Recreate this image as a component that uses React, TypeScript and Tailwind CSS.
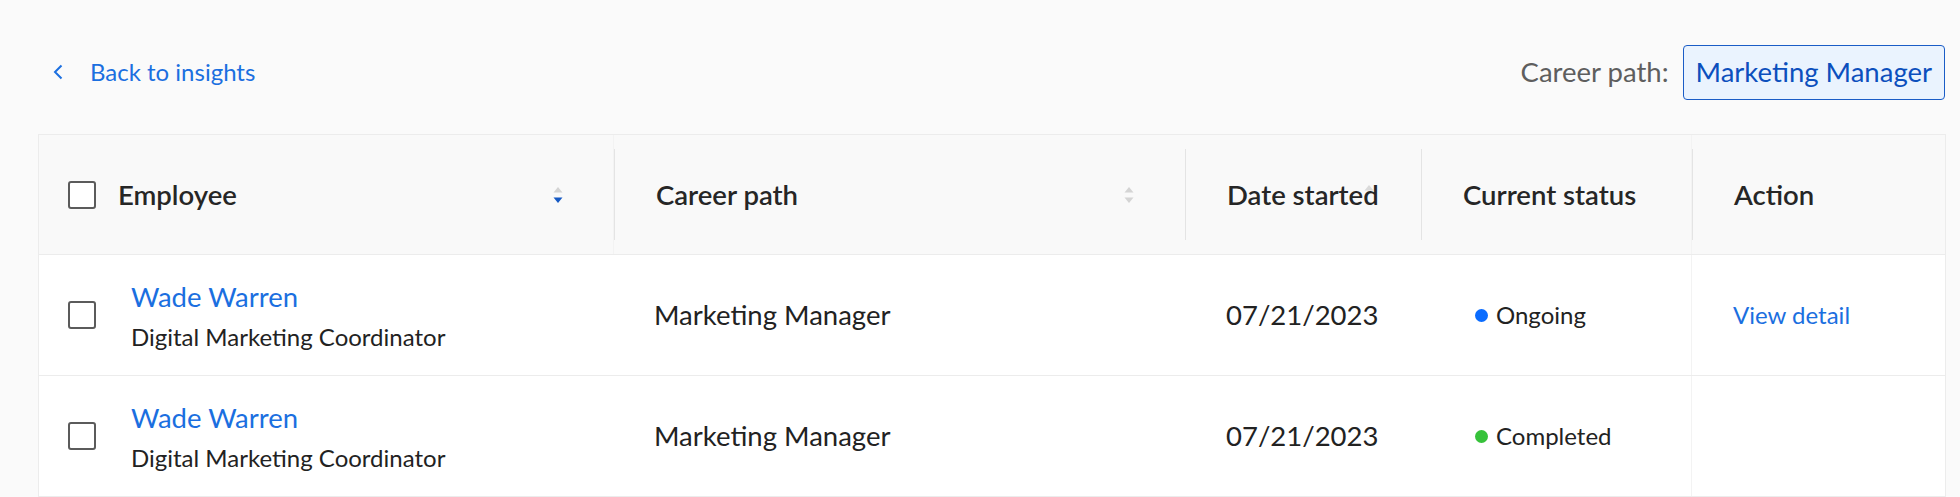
import React from "react";

const SortIcon = ({ active }: { active?: boolean }) => (
  <svg width="10" height="16" viewBox="0 0 10 16" className="shrink-0">
    <path d="M5 0 L9.5 5.5 L0.5 5.5 Z" fill="#d4d4d4" />
    <path d="M5 16 L9.5 10.5 L0.5 10.5 Z" fill={active ? "#1559c4" : "#d4d4d4"} />
  </svg>
);

const Checkbox = () => (
  <div className="w-[28px] h-[28px] shrink-0 rounded-[3px] border-[2.5px] border-[#5b5b5b] bg-white" />
);

const rows = [
  { status: "Ongoing", dot: "bg-[#0a6cff]", action: true },
  { status: "Completed", dot: "bg-[#36c23a]", action: false },
];

export default function App() {
  return (
    <div
      className="w-[1960px] h-[497px] overflow-hidden bg-[#fafafa] text-[#222222]"
      style={{ fontFamily: "Lato, 'Noto Sans', sans-serif" }}
    >
      <div className="h-[134px] flex items-center justify-between pl-[53px] pr-[15px] pt-[10px]">
        <div className="flex items-center gap-[27px] text-[24px] text-[#1b6fe0]">
          <svg width="10" height="16" viewBox="0 0 10 16">
            <path d="M8.5 1.5 L2 8 L8.5 14.5" fill="none" stroke="#1b6fe0" strokeWidth="2" />
          </svg>
          <span>Back to insights</span>
        </div>
        <div className="flex items-center gap-[14px]">
          <span className="text-[27.5px] text-[#5e5e5e]">Career path:</span>
          <div className="h-[55px] px-[12px] flex items-center rounded-[4px] border-[1.5px] border-[#1a5cc6] bg-[#eaf3fe] text-[27.5px] text-[#0c4fbd]">
            Marketing Manager
          </div>
        </div>
      </div>

      <div className="ml-[38px] mr-[14px] border-l border-r border-t border-[#ececec]">
        <div className="grid grid-cols-[574px_572px_236px_270px_256px] h-[120px] bg-[#f9f9f9] border-b border-[#ececec] text-[27.5px] font-semibold text-[#262626]">
          <div className="flex items-center pl-[29px] pr-[50px]">
            <Checkbox />
            <span className="ml-[22px] flex-1">Employee</span>
            <SortIcon active />
          </div>
          <div className="py-[14px] border-l border-[#f3f3f3]">
            <div className="h-full flex items-center pl-[41px] pr-[51px] border-l border-[#e4e4e4]">
              <span className="flex-1">Career path</span>
              <SortIcon />
            </div>
          </div>
          <div className="py-[14px]">
            <div className="relative h-full flex items-center border-l border-[#e4e4e4] pl-[41px]">
              <span>Date started</span>
              <svg width="10" height="6" viewBox="0 0 10 6" className="absolute left-[178px] top-[36px]">
                <path d="M5 0 L9.5 5.5 L0.5 5.5 Z" fill="#dadada" />
              </svg>
            </div>
          </div>
          <div className="py-[14px]">
            <div className="h-full flex items-center border-l border-[#e4e4e4] pl-[41px]">Current status</div>
          </div>
          <div className="py-[14px] border-l border-[#f3f3f3]">
            <div className="h-full flex items-center border-l border-[#e4e4e4] pl-[41px]">Action</div>
          </div>
        </div>
        {rows.map((r, i) => (
          <div
            key={i}
            className="grid grid-cols-[574px_572px_236px_270px_256px] h-[121px] bg-white border-b border-[#ececec]"
          >
            <div className="flex items-center pl-[29px]">
              <Checkbox />
              <div className="ml-[35px] mt-[1px] flex flex-col gap-[8px]">
                <span className="text-[27.5px] leading-[34px] text-[#1b6fe0]">Wade Warren</span>
                <span className="text-[24px] leading-[30px] text-[#222222]">Digital Marketing Coordinator</span>
              </div>
            </div>
            <div className="flex items-center pl-[41px] text-[27.5px]">Marketing Manager</div>
            <div className="flex items-center pl-[41px] text-[27.5px]">07/21/2023</div>
            <div className="flex items-center pl-[54px] gap-[8px] text-[24px]">
              <span className={`w-[13px] h-[13px] rounded-full ${r.dot}`} />
              <span>{r.status}</span>
            </div>
            <div className="flex items-center border-l border-[#f3f3f3] pl-[41px] text-[24px] text-[#1b6fe0]">
              {r.action ? "View detail" : ""}
            </div>
          </div>
        ))}
      </div>
    </div>
  );
}
